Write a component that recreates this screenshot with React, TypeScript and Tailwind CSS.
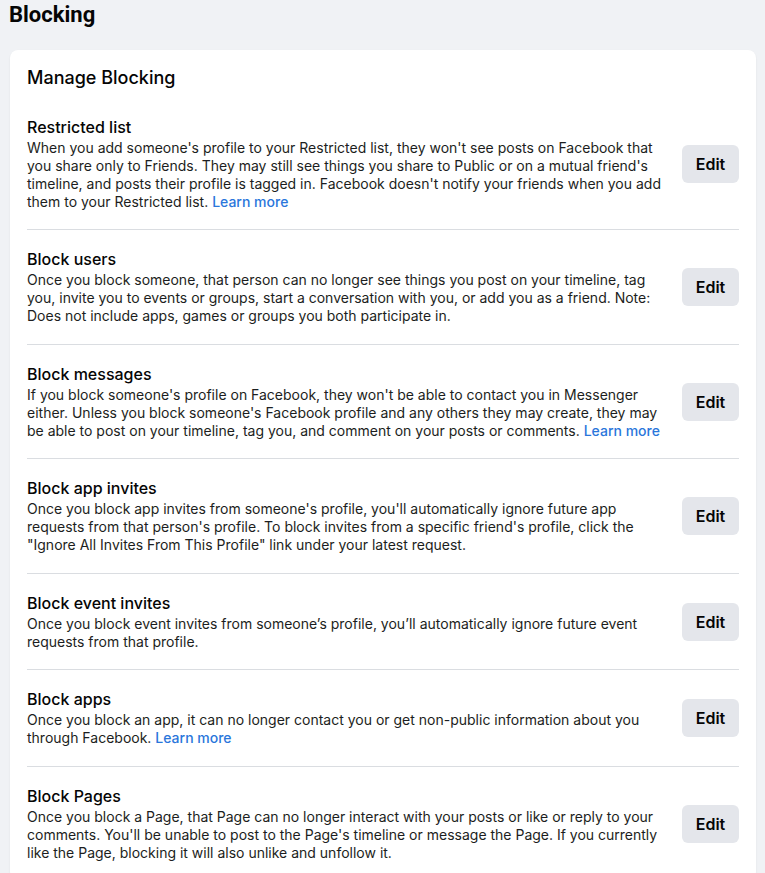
import React from "react";

type Row = {
  title: string;
  lines: string[];
  learnMore?: boolean;
};

const rows: Row[] = [
  {
    title: "Restricted list",
    lines: [
      "When you add someone's profile to your Restricted list, they won't see posts on Facebook that",
      "you share only to Friends. They may still see things you share to Public or on a mutual friend's",
      "timeline, and posts their profile is tagged in. Facebook doesn't notify your friends when you add",
      "them to your Restricted list.",
    ],
    learnMore: true,
  },
  {
    title: "Block users",
    lines: [
      "Once you block someone, that person can no longer see things you post on your timeline, tag",
      "you, invite you to events or groups, start a conversation with you, or add you as a friend. Note:",
      "Does not include apps, games or groups you both participate in.",
    ],
  },
  {
    title: "Block messages",
    lines: [
      "If you block someone's profile on Facebook, they won't be able to contact you in Messenger",
      "either. Unless you block someone's Facebook profile and any others they may create, they may",
      "be able to post on your timeline, tag you, and comment on your posts or comments.",
    ],
    learnMore: true,
  },
  {
    title: "Block app invites",
    lines: [
      "Once you block app invites from someone's profile, you'll automatically ignore future app",
      "requests from that person's profile. To block invites from a specific friend's profile, click the",
      "\"Ignore All Invites From This Profile\" link under your latest request.",
    ],
  },
  {
    title: "Block event invites",
    lines: [
      "Once you block event invites from someone\u2019s profile, you\u2019ll automatically ignore future event",
      "requests from that profile.",
    ],
  },
  {
    title: "Block apps",
    lines: [
      "Once you block an app, it can no longer contact you or get non-public information about you",
      "through Facebook.",
    ],
    learnMore: true,
  },
  {
    title: "Block Pages",
    lines: [
      "Once you block a Page, that Page can no longer interact with your posts or like or reply to your",
      "comments. You'll be unable to post to the Page's timeline or message the Page. If you currently",
      "like the Page, blocking it will also unlike and unfollow it.",
    ],
  },
];

export default function App() {
  return (
    <div
      className="min-h-[873px] w-full bg-[#f0f2f5] text-[#1c1e21]"
      style={{ fontFamily: "Inter, 'Noto Sans', sans-serif" }}
    >
      <h1
        className="pl-[9px] text-[22px] font-bold leading-[30px] text-[#050505]"
        style={{ fontFamily: "Roboto, 'Noto Sans', sans-serif" }}
      >
        Blocking
      </h1>
      <div className="mt-5 pl-[10px] pr-[9px]">
        <div className="rounded-lg bg-white px-[17px] pt-4 shadow-[0_1px_2px_rgba(0,0,0,0.08)]">
          <h2 className="mb-2 text-[18px] font-medium leading-6 text-[#050505]">
            Manage Blocking
          </h2>
          <div>
            {rows.map((row, i) => (
              <div
                key={row.title}
                className={
                  i === 0
                    ? "flex items-center gap-4 pt-[19px] pb-[18px]"
                    : "flex items-center gap-4 border-t border-[#dadde1] pt-[19px] pb-[18.5px]"
                }
              >
                <div className="flex-1 min-w-0">
                  <div className="text-[16px] font-medium leading-5 text-[#050505]">
                    {row.title}
                  </div>
                  <div className="mt-0.5 text-[14px] leading-[18px] text-[#1c1e21]">
                    {row.lines.map((line, j) => (
                      <span key={j} className="block whitespace-nowrap">
                        {line}
                        {row.learnMore && j === row.lines.length - 1 ? (
                          <>
                            {" "}
                            <a className="font-medium text-[#2a76db]" href="#">
                              Learn more
                            </a>
                          </>
                        ) : null}
                      </span>
                    ))}
                  </div>
                </div>
                <button className="flex h-[38px] w-[57px] shrink-0 items-center justify-center rounded-md bg-[#e4e6eb] text-[16px] font-semibold text-[#050505]">
                  Edit
                </button>
              </div>
            ))}
          </div>
        </div>
      </div>
    </div>
  );
}
